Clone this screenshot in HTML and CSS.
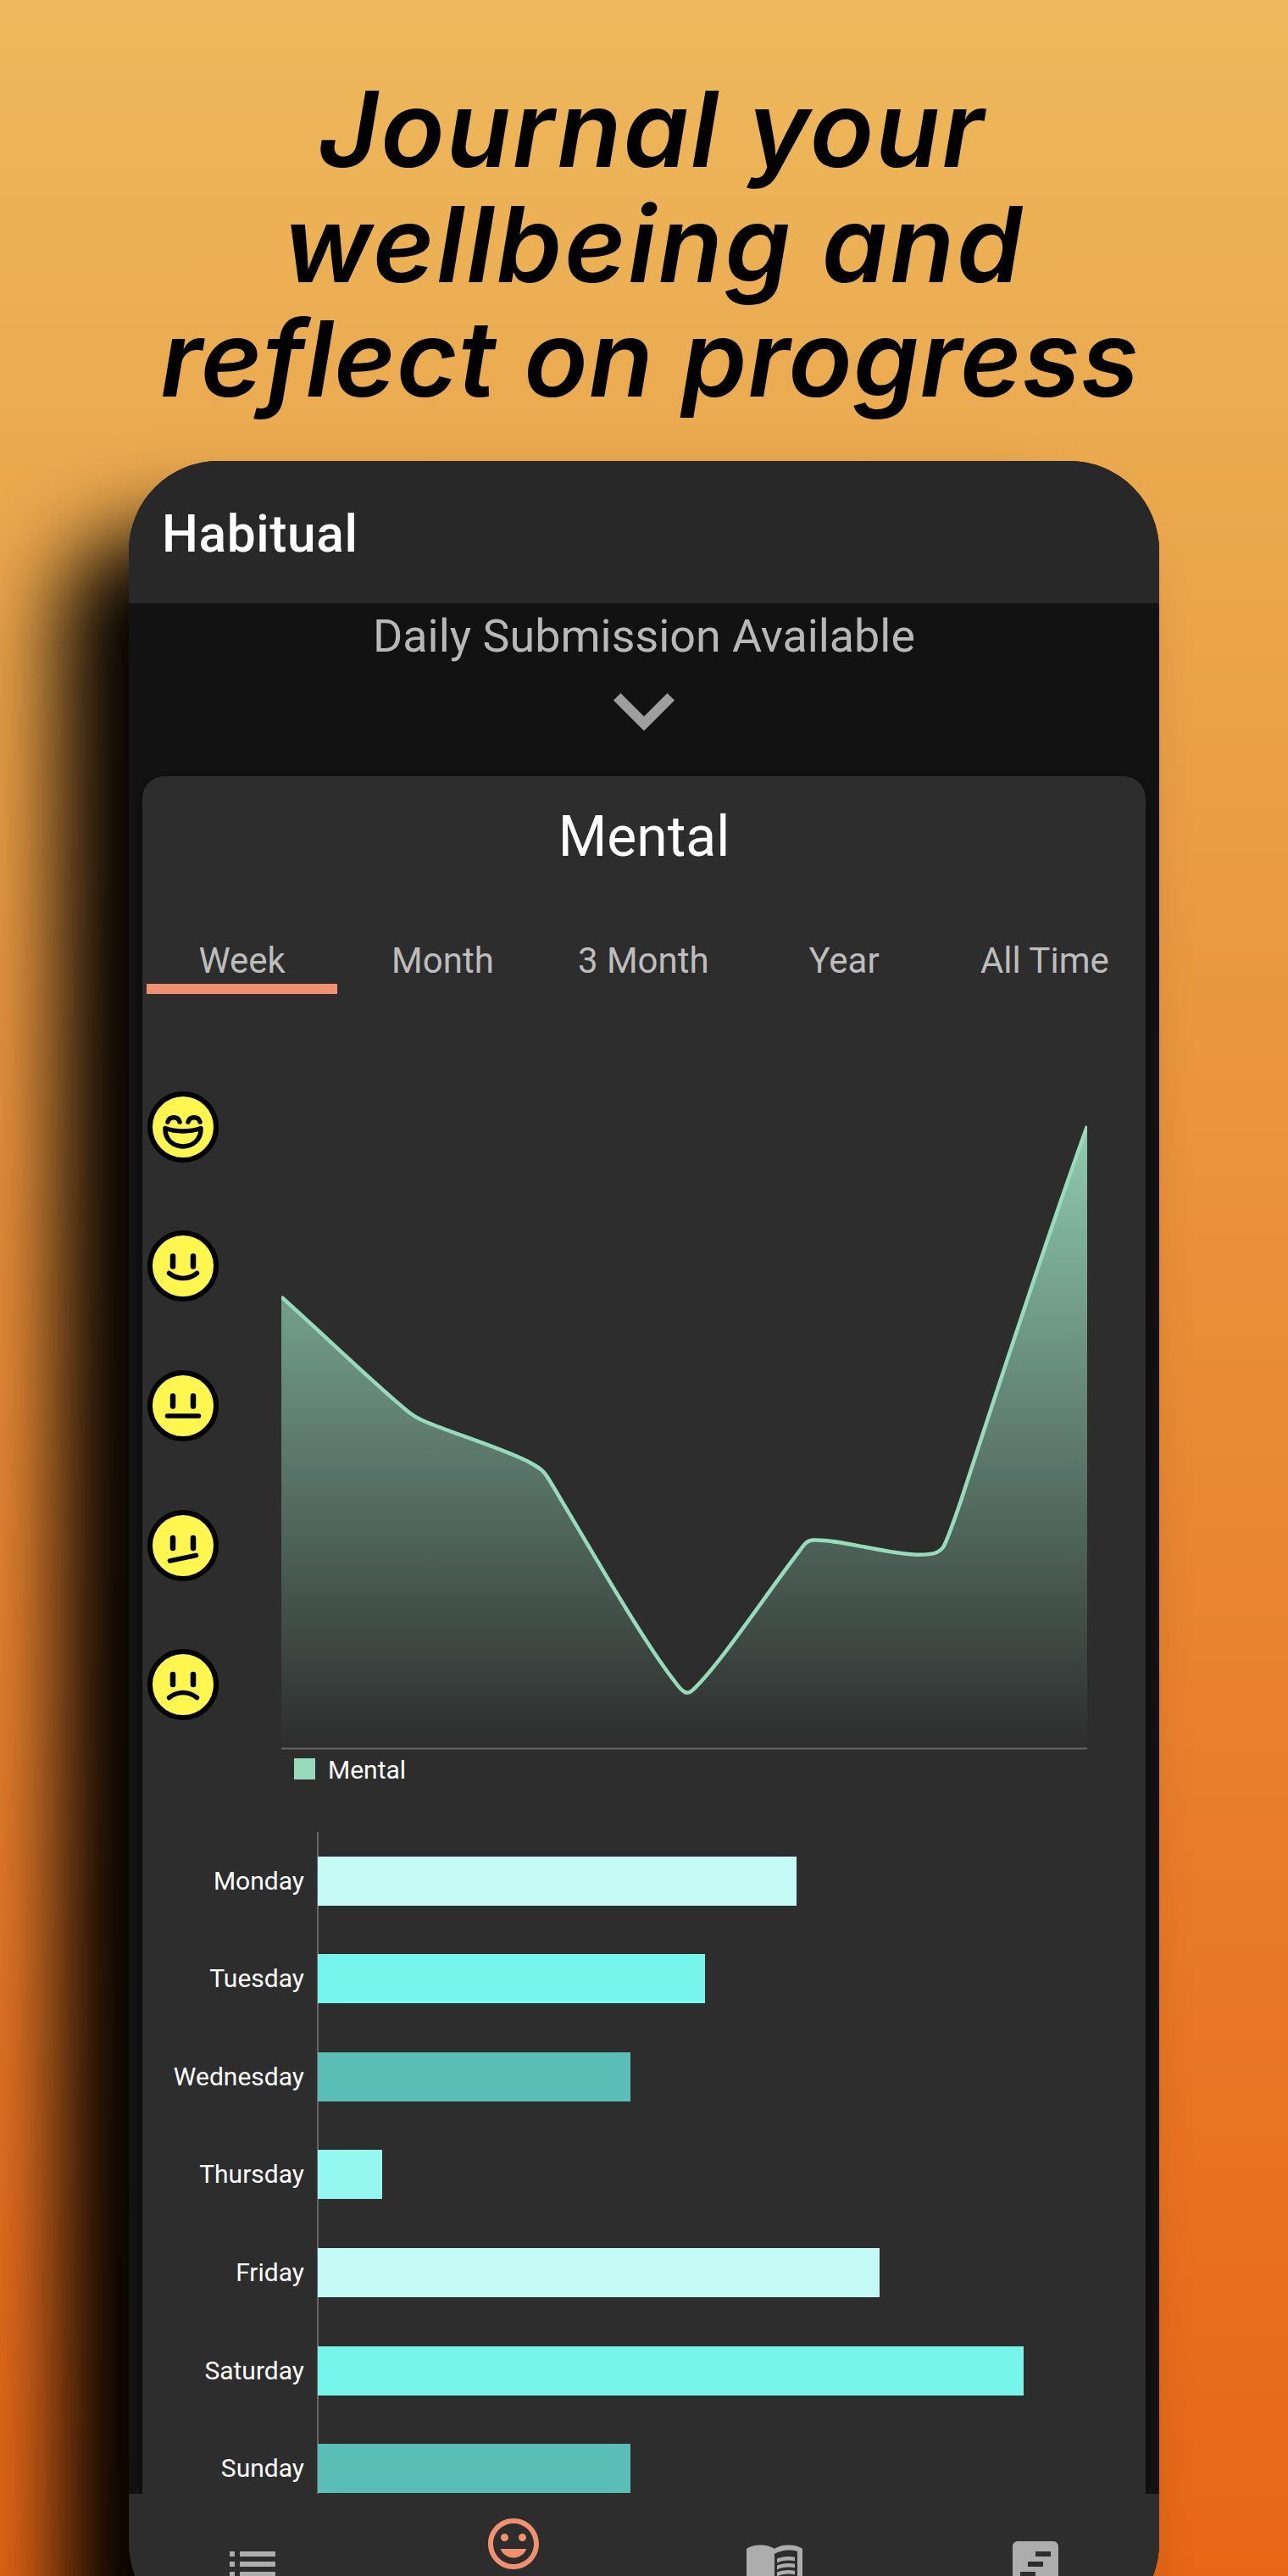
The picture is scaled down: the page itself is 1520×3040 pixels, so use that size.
FILE: index.html
```html
<!DOCTYPE html>
<html lang="en">
<head>
<meta charset="utf-8">
<title>Habitual</title>
<link rel="stylesheet" href="styles.css">
</head>
<body>
<main class="promo">
  <h1 class="headline"><span class="line line-a">Journal your</span><span class="line line-b">wellbeing and</span><span class="line line-c">reflect on progress</span></h1>
  <section class="phone">
    <header class="appbar">Habitual</header>
    <div class="screen">
      <div class="submission">
        <p>Daily Submission Available</p>
        <svg class="chevron" viewBox="6 8.59 12 7.41"><path d="M16.59 8.59 12 13.17 7.41 8.59 6 10l6 6 6-6z"/></svg>
      </div>
      <article class="card">
        <h2>Mental</h2>
        <div class="tabs">
          <div class="tab active">Week</div><div class="tab">Month</div><div class="tab">3 Month</div><div class="tab">Year</div><div class="tab">All Time</div>
        </div>
        <div class="trend">
          <div class="faces">
            <svg viewBox="0 0 84 84"><circle class="face" cx="42" cy="42" r="39"/><path class="ink" d="M24 36c2-7 12-7 14 0M48 36c2-7 12-7 14 0M21 43.500C34 48 50 48 63 43.500C64 72 20 72 21 43.500z"/></svg>
            <svg viewBox="0 0 84 84"><circle class="face" cx="42" cy="42" r="39"/><path class="eyes" d="M30 30.500v12M54 30.500v12"/><path class="ink" d="M25.500 50.500c10 8 23 8 33 0"/></svg>
            <svg viewBox="0 0 84 84"><circle class="face" cx="42" cy="42" r="39"/><path class="eyes" d="M30 30.500v12M54 30.500v12"/><path class="ink" d="M23.500 54h37"/></svg>
            <svg viewBox="0 0 84 84"><circle class="face" cx="42" cy="42" r="39"/><path class="eyes" d="M30 33v12M54 33v12"/><path class="ink" d="M26.500 60 57.500 53.500"/></svg>
            <svg viewBox="0 0 84 84"><circle class="face" cx="42" cy="42" r="39"/><path class="eyes" d="M30 30v12M54 30v12"/><path class="ink" d="M25.500 57.500c10-8 23-8 33 0"/></svg>
          </div>
          <div class="plot">
            <svg class="area" viewBox="332 1320 952 745">
              <defs><linearGradient id="fade" x1="0" y1="1320" x2="0" y2="2064" gradientUnits="userSpaceOnUse"><stop offset="0" stop-color="#98dbbc" stop-opacity=".92"/><stop offset="1" stop-color="#98dbbc" stop-opacity="0"/></linearGradient>
              <clipPath id="bounds"><rect x="332" y="1320" width="951" height="745"/></clipPath></defs>
              <g clip-path="url(#bounds)">
              <path fill="url(#fade)" d="M332 1530.500C385 1578 448 1639 483 1667C487 1670 491 1673 498 1676C534 1692 600 1711 629 1728C637 1733 641 1735 646 1743C678 1795 755 1932 796 1984C806 1998 811 2001 818 1994C850 1964 905 1880 943 1831C949 1823 951 1818 960 1817.500C990 1816 1045 1834 1083 1834.700C1098 1834.700 1107 1834 1113 1826C1118 1818 1124 1800 1134 1771C1175 1646 1230 1476 1283 1329V2064H332z"/>
              <path class="curve" d="M332 1530.500C385 1578 448 1639 483 1667C487 1670 491 1673 498 1676C534 1692 600 1711 629 1728C637 1733 641 1735 646 1743C678 1795 755 1932 796 1984C806 1998 811 2001 818 1994C850 1964 905 1880 943 1831C949 1823 951 1818 960 1817.500C990 1816 1045 1834 1083 1834.700C1098 1834.700 1107 1834 1113 1826C1118 1818 1124 1800 1134 1771C1175 1646 1230 1476 1283 1329"/>
              </g>
              <path class="axis" d="M332 2063.500H1283"/>
            </svg>
            <div class="legend"><i></i><span>Mental</span></div>
          </div>
        </div>
        <div class="bars">
          <div class="day"><span>Monday</span><b class="pale" style="width:565px"></b></div>
          <div class="day"><span>Tuesday</span><b class="bright" style="width:457px"></b></div>
          <div class="day"><span>Wednesday</span><b class="deep" style="width:369px"></b></div>
          <div class="day"><span>Thursday</span><b class="soft" style="width:76px"></b></div>
          <div class="day"><span>Friday</span><b class="pale" style="width:663px"></b></div>
          <div class="day"><span>Saturday</span><b class="bright" style="width:833px"></b></div>
          <div class="day"><span>Sunday</span><b class="deep" style="width:369px"></b></div>
        </div>
      </article>
    </div>
    <nav class="bottomnav">
      <svg viewBox="0 0 24 24"><path d="M3 7h2v2H3zM3 11h2v2H3zM3 15h2v2H3zM7 7h14v2H7zM7 11h14v2H7zM7 15h14v2H7z"/></svg>
      <svg class="current" viewBox="0 0 24 24"><path d="M11.990 2C6.470 2 2 6.480 2 12s4.470 10 9.990 10C17.520 22 22 17.520 22 12S17.520 2 11.990 2zM12 20c-4.420 0-8-3.580-8-8s3.580-8 8-8 8 3.580 8 8-3.580 8-8 8zM15.500 11c.83 0 1.500-.67 1.500-1.500S16.330 8 15.500 8 14 8.670 14 9.500s.67 1.500 1.500 1.500zM8.500 11c.83 0 1.500-.67 1.500-1.500S9.330 8 8.500 8 7 8.670 7 9.500 7.670 11 8.500 11zM12 17.500c2.330 0 4.310-1.460 5.110-3.500H6.890c.8 2.040 2.780 3.500 5.110 3.500z"/></svg>
      <svg viewBox="0 0 24 24"><path d="M21 5c-1.110-.35-2.330-.5-3.500-.5-1.950 0-4.050.4-5.500 1.500-1.450-1.100-3.550-1.500-5.500-1.500S2.450 4.900 1 6v14.650c0 .25.25.5.5.5.1 0 .15-.05.25-.05C3.100 20.450 5.050 20 6.500 20c1.950 0 4.050.4 5.500 1.500 1.350-.85 3.800-1.500 5.500-1.500 1.650 0 3.350.3 4.750 1.050.1.050.15.050.25.050.25 0 .5-.25.5-.5V6c-.6-.45-1.250-.75-2-1zm0 13.500c-1.100-.35-2.300-.5-3.500-.5-1.700 0-4.150.65-5.500 1.500V8c1.350-.85 3.800-1.500 5.500-1.500 1.200 0 2.400.15 3.500.5v11.500z"/><path d="M17.500 10.500c.88 0 1.730.09 2.500.26V9.240c-.79-.15-1.640-.24-2.500-.24-1.700 0-3.240.29-4.500.83v1.660c1.130-.64 2.700-.99 4.500-.99zM13 12.490v1.660c1.130-.64 2.700-.99 4.500-.99.88 0 1.730.09 2.500.26V11.900c-.79-.15-1.640-.24-2.500-.24-1.700 0-3.240.3-4.500.83zM17.500 14.330c-1.700 0-3.240.29-4.500.83v1.660c1.130-.64 2.700-.99 4.500-.99.88 0 1.730.09 2.500.26v-1.520c-.79-.16-1.640-.24-2.500-.24z"/></svg>
      <svg viewBox="0 0 24 24"><path fill-rule="evenodd" d="M19 3H5c-1.100 0-2 .9-2 2v14c0 1.100.9 2 2 2h14c1.100 0 2-.9 2-2V5c0-1.100-.9-2-2-2zM12 7h6v2h-6zM9 11h6v2H9zM6 15h6v2H6z"/></svg>
    </nav>
  </section>
</main>
</body>
</html>
```
FILE: styles.css
```css
* { box-sizing: border-box; margin: 0; padding: 0; }
html, body { height: 3040px; overflow: hidden; }
svg { display: block; }
.promo {
  height: 3040px;
  overflow: hidden;
  display: flex;
  flex-direction: column;
  align-items: center;
  background: linear-gradient(#edb85b 0, #ebaa4f 17%, #e86a1a 94%, #e76717 100%);
  font-family: Roboto, sans-serif;
}
.headline {
  flex: none;
  width: 100%;
  height: 544px;
  padding-top: 85px;
  font: italic 600 124px/135.500px Inter, sans-serif;
  font-feature-settings: "cv11";
  color: #000;
  text-align: center;
}
.line { display: block; white-space: nowrap; }
.line-a { letter-spacing: 2.100px; padding-left: 18px; }
.line-b { letter-spacing: 2.800px; padding-left: 24px; }
.line-c { letter-spacing: 1.050px; padding-left: 14px; }
.phone {
  flex: none;
  width: 1216px;
  height: 2563px;
  border-radius: 106px;
  background: #121212;
  box-shadow: -80px 84px 100px #000;
  overflow: hidden;
  display: flex;
  flex-direction: column;
}
.appbar {
  flex: none;
  height: 167.500px;
  padding: 51px 0 0 39px;
  background: #282828;
  color: #fff;
  font-size: 60.500px;
  line-height: 72px;
  letter-spacing: .6px;
  font-weight: 500;
}
.screen { flex: none; height: 2231.500px; padding: 0 16px; overflow: hidden; }
.submission {
  height: 204px;
  display: flex;
  flex-direction: column;
  align-items: center;
  font-size: 53.800px;
  line-height: 64px;
  color: #b8b8b8;
  padding-top: 7px;
}
.chevron { width: 72px; height: 44.500px; margin-top: 35px; fill: #9e9e9e; }
.card {
  height: 2080px;
  border-radius: 26px;
  background: #2d2d2d;
  color: #fff;
  box-shadow: 0 2px 8px #0006;
}
.card h2 {
  height: 178px;
  padding-top: 32px;
  font-size: 66px;
  line-height: 80px;
  font-weight: 400;
  text-align: center;
}
.tabs { display: grid; grid-template-columns: repeat(5, 1fr); height: 190px; }
.tab {
  height: 79px;
  margin: 0 6.500px 0 5px;
  padding-top: 15px;
  text-align: center;
  font-size: 42px;
  line-height: 50px;
  color: #bdbdbd;
}
.active { border-bottom: 12px solid #f1916f; }
.trend { display: flex; height: 878px; padding-left: 5.500px; }
.faces {
  width: 158.500px;
  padding-top: 4px;
  display: flex;
  flex-direction: column;
  gap: 80.700px;
}
.faces svg { width: 84px; height: 84px; }
.face { fill: #fff650; stroke: #000; stroke-width: 6; }
.ink { fill: none; stroke: #000; stroke-width: 5.500; stroke-linecap: round; stroke-linejoin: round; }
.eyes { fill: none; stroke: #000; stroke-width: 6.500; stroke-linecap: round; }
.plot { padding-top: 36px; }
.area { width: 952px; height: 745px; }
.curve { fill: none; stroke: #98dbbc; stroke-width: 4.500; }
.axis { fill: none; stroke: #656565; stroke-width: 2; }
.legend {
  display: flex;
  align-items: center;
  gap: 15px;
  padding: 4px 0 0 15px;
  font-size: 30px;
  line-height: 36px;
}
.legend i { width: 25px; height: 25px; background: #98dbbc; }
.legend span { padding-top: 2px; }
.bars {
  position: relative;
  height: 800px;
  padding-top: 29px;
  display: grid;
  grid-auto-rows: 58px;
  row-gap: 57.630px;
}
.bars::before {
  content: "";
  position: absolute;
  left: 206px;
  top: 0;
  bottom: 0;
  width: 1.500px;
  background: #666;
}
.day { display: flex; align-items: center; font-size: 30px; line-height: 36px; position: relative; }
.day span { width: 191px; text-align: right; margin-right: 16px; }
.day b { height: 58px; }
.pale { background: #c3faf6; }
.bright { background: #76f6eb; }
.deep { background: #5abdb6; }
.soft { background: #94f8f0; }
.bottomnav {
  flex: none;
  height: 178px;
  background: #2d2d2d;
  display: flex;
  justify-content: space-between;
  padding: 47px 110px 0 109.500px;
}
.bottomnav svg { width: 72px; height: 72px; fill: #adadad; }
.bottomnav .current { fill: #f1916f; margin-top: -24px; }
```
